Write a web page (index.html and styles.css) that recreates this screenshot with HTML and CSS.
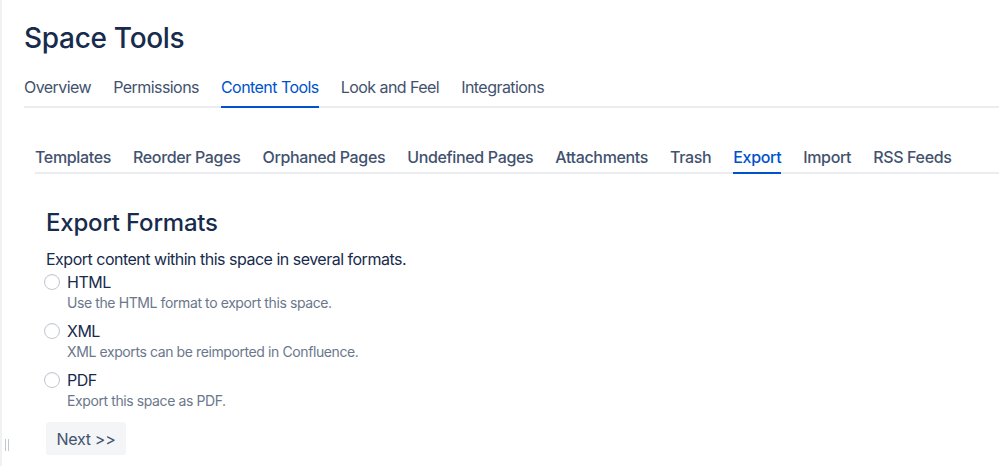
FILE: index.html
```html
<!DOCTYPE html>
<html lang="en">
<head>
    <meta charset="UTF-8">
    <title>Space Tools - Export</title>
    <link rel="stylesheet" href="styles.css">
</head>
<body>
    <div class="page">
        <header class="space-header">
            <h1>Space Tools</h1>
            <nav class="tabs main-tabs">
                <a href="#" class="tab">Overview</a>
                <a href="#" class="tab">Permissions</a>
                <a href="#" class="tab active">Content Tools</a>
                <a href="#" class="tab">Look and Feel</a>
                <a href="#" class="tab">Integrations</a>
            </nav>
        </header>

        <div class="content">
            <nav class="tabs sub-tabs">
                <a href="#" class="tab">Templates</a>
                <a href="#" class="tab">Reorder Pages</a>
                <a href="#" class="tab">Orphaned Pages</a>
                <a href="#" class="tab">Undefined Pages</a>
                <a href="#" class="tab">Attachments</a>
                <a href="#" class="tab">Trash</a>
                <a href="#" class="tab active">Export</a>
                <a href="#" class="tab">Import</a>
                <a href="#" class="tab">RSS Feeds</a>
            </nav>

            <form class="export-form">
                <h2>Export Formats</h2>
                <p class="intro">Export content within this space in several formats.</p>

                <label class="format">
                    <input type="radio" name="format" value="html">
                    <span class="format-text">
                        <span class="format-name">HTML</span>
                        <span class="format-desc">Use the HTML format to export this space.</span>
                    </span>
                </label>
                <label class="format">
                    <input type="radio" name="format" value="xml">
                    <span class="format-text">
                        <span class="format-name">XML</span>
                        <span class="format-desc">XML exports can be reimported in Confluence.</span>
                    </span>
                </label>
                <label class="format">
                    <input type="radio" name="format" value="pdf">
                    <span class="format-text">
                        <span class="format-name">PDF</span>
                        <span class="format-desc">Export this space as PDF.</span>
                    </span>
                </label>

                <button type="button" class="next-button">Next &gt;&gt;</button>
            </form>
        </div>
    </div>
    <div class="resize-handle"></div>
</body>
</html>
```

FILE: styles.css
```css
:root {
    --text-color: #172b4d;
    --tab-color: #42526e;
    --active-color: #0052cc;
    --muted-color: #6b778c;
    --line-color: #ebecf0;
    --button-bg: #f4f5f7;
}

* {
    margin: 0;
    padding: 0;
    box-sizing: border-box;
}

body {
    font-family: Inter, 'Noto Sans', sans-serif;
    color: var(--text-color);
    background: #fff;
    border-left: 2px solid #f0f1f3;
    min-height: 466px;
    overflow: hidden;
    letter-spacing: -0.5px;
}

.space-header {
    padding: 22px 0 0 22px;
}

.space-header h1 {
    font-size: 28px;
    font-weight: 500;
    line-height: 32px;
    letter-spacing: -0.3px;
}

.tabs {
    display: flex;
    gap: 22px;
    border-bottom: 2px solid var(--line-color);
}

.tab {
    color: var(--tab-color);
    text-decoration: none;
    font-size: 16px;
    line-height: 20px;
    padding-bottom: 9px;
    margin-bottom: -2px;
    border-bottom: 2px solid transparent;
    white-space: nowrap;
}

.tab.active {
    color: var(--active-color);
    border-bottom-color: var(--active-color);
}

.main-tabs {
    margin-top: 23px;
    letter-spacing: -0.55px;
}

.content {
    padding: 39px 0 0 33px;
}

.sub-tabs .tab {
    font-weight: 500;
    padding-bottom: 5px;
    letter-spacing: -0.35px;
}

.export-form {
    padding: 34px 0 0 11px;
}

.export-form h2 {
    font-size: 24px;
    font-weight: 500;
    line-height: 30px;
    letter-spacing: -0.2px;
}

.intro {
    font-size: 16px;
    line-height: 20px;
    margin-top: 11px;
}

.format {
    display: flex;
    align-items: flex-start;
    gap: 7px;
    margin-top: 9px;
}

.format:first-of-type {
    margin-top: 3px;
}

.format input {
    appearance: none;
    flex-shrink: 0;
    width: 16px;
    height: 16px;
    margin: 2px 0 0 -2px;
    border: 1px solid #c1c7d0;
    border-radius: 50%;
    background: #fff;
    box-shadow: inset 0 1px 1px rgba(9, 30, 66, 0.06);
}

.format-text {
    display: flex;
    flex-direction: column;
}

.format-name {
    font-size: 16px;
    line-height: 20px;
}

.format-desc {
    font-size: 14px;
    line-height: 18px;
    margin-top: 2px;
    color: var(--muted-color);
    letter-spacing: -0.4px;
}

.next-button {
    display: block;
    margin-top: 12px;
    width: 80px;
    height: 33px;
    border: none;
    border-radius: 3px;
    background: var(--button-bg);
    color: var(--tab-color);
    font-family: inherit;
    font-size: 16px;
    letter-spacing: -0.3px;
}

.resize-handle {
    position: absolute;
    left: 5px;
    top: 439px;
    width: 4px;
    height: 12px;
    border-left: 1px solid #c1c7d0;
    border-right: 1px solid #c1c7d0;
}
```
